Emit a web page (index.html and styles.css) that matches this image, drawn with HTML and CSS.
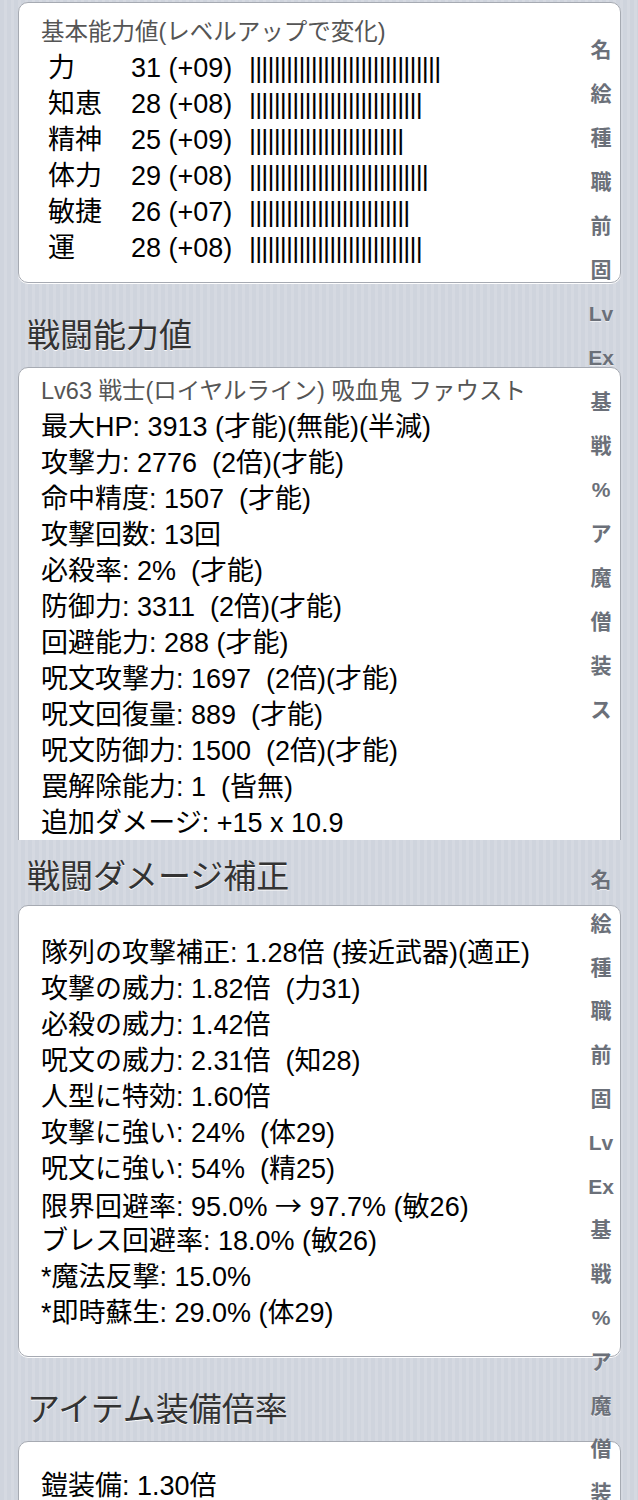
FILE: index.html
```html
<!DOCTYPE html>
<html lang="ja">
<head>
<meta charset="utf-8">
<title>ステータス</title>
<link rel="stylesheet" href="styles.css">
</head>
<body>
<div class="screen screen--one">
  <div class="card card--stats">
    <div class="caption">基本能力値(レベルアップで変化)</div>
    <div class="stat"><span>力</span><span>31 (+09)</span><span class="bar">|||||||||||||||||||||||||||||||</span></div>
    <div class="stat"><span>知恵</span><span>28 (+08)</span><span class="bar">||||||||||||||||||||||||||||</span></div>
    <div class="stat"><span>精神</span><span>25 (+09)</span><span class="bar">|||||||||||||||||||||||||</span></div>
    <div class="stat"><span>体力</span><span>29 (+08)</span><span class="bar">|||||||||||||||||||||||||||||</span></div>
    <div class="stat"><span>敏捷</span><span>26 (+07)</span><span class="bar">||||||||||||||||||||||||||</span></div>
    <div class="stat"><span>運</span><span>28 (+08)</span><span class="bar">||||||||||||||||||||||||||||</span></div>
  </div>
  <div class="section-title">戦闘能力値</div>
  <div class="card card--battle">
    <div class="caption">Lv63 戦士(ロイヤルライン) 吸血鬼 ファウスト</div>
    <div class="line">最大HP: 3913 (才能)(無能)(半減)</div>
    <div class="line">攻撃力: 2776  (2倍)(才能)</div>
    <div class="line">命中精度: 1507  (才能)</div>
    <div class="line">攻撃回数: 13回</div>
    <div class="line">必殺率: 2%  (才能)</div>
    <div class="line">防御力: 3311  (2倍)(才能)</div>
    <div class="line">回避能力: 288 (才能)</div>
    <div class="line">呪文攻撃力: 1697  (2倍)(才能)</div>
    <div class="line">呪文回復量: 889  (才能)</div>
    <div class="line">呪文防御力: 1500  (2倍)(才能)</div>
    <div class="line">罠解除能力: 1  (皆無)</div>
    <div class="line">追加ダメージ: +15 x 10.9</div>
  </div>
  <nav class="index index--one">
    <span>名</span><span>絵</span><span>種</span><span>職</span><span>前</span><span>固</span><span>Lv</span><span>Ex</span><span>基</span><span>戦</span><span>%</span><span>ア</span><span>魔</span><span>僧</span><span>装</span><span>ス</span>
  </nav>
</div>
<div class="screen screen--two">
  <div class="section-title section-title--top">戦闘ダメージ補正</div>
  <div class="card card--damage">
    <div class="line">隊列の攻撃補正: 1.28倍 (接近武器)(適正)</div>
    <div class="line">攻撃の威力: 1.82倍  (力31)</div>
    <div class="line">必殺の威力: 1.42倍</div>
    <div class="line">呪文の威力: 2.31倍  (知28)</div>
    <div class="line">人型に特効: 1.60倍</div>
    <div class="line">攻撃に強い: 24%  (体29)</div>
    <div class="line">呪文に強い: 54%  (精25)</div>
    <div class="line">限界回避率: 95.0% <span class="arrow">→</span> 97.7% (敏26)</div>
    <div class="line">ブレス回避率: 18.0% (敏26)</div>
    <div class="line">*魔法反撃: 15.0%</div>
    <div class="line">*即時蘇生: 29.0% (体29)</div>
  </div>
  <div class="section-title">アイテム装備倍率</div>
  <div class="card card--equip">
    <div class="line">鎧装備: 1.30倍</div>
  </div>
  <nav class="index index--two">
    <span>名</span><span>絵</span><span>種</span><span>職</span><span>前</span><span>固</span><span>Lv</span><span>Ex</span><span>基</span><span>戦</span><span>%</span><span>ア</span><span>魔</span><span>僧</span><span>装</span>
  </nav>
</div>
</body>
</html>
```
FILE: styles.css
```css
html, body {
  margin: 0;
  padding: 0;
}
body {
  font-family: "Liberation Sans", "Noto Sans CJK JP", sans-serif;
  background: repeating-linear-gradient(90deg, #cfd4dd 0, #cfd4dd 4px, #d5d9e1 4px, #d5d9e1 7px);
  color: #000;
}
.screen {
  position: relative;
  overflow: hidden;
  box-sizing: border-box;
}
.screen--one {
  height: 840px;
  padding-top: 2px;
}
.screen--two {
  height: 660px;
}
.card {
  background: #fff;
  border: 1px solid #a6aab2;
  border-radius: 10px;
  margin: 0 17px 0 18px;
  padding: 0 22px;
  box-shadow: 0 1px 0 rgba(255, 255, 255, 0.95);
}
.card--stats {
  padding-top: 11px;
  padding-bottom: 16px;
}
.card--battle {
  padding-top: 5px;
  padding-bottom: 20px;
}
.card--damage {
  padding-top: 29px;
  padding-bottom: 25px;
}
.card--equip {
  padding-top: 26px;
  padding-bottom: 20px;
}
.caption {
  font-size: 23.5px;
  height: 36px;
  line-height: 36px;
  color: #555;
  white-space: pre;
}
.line {
  font-size: 27px;
  height: 36px;
  line-height: 36px;
  white-space: pre;
}
.arrow {
  font-family: "Noto Sans CJK JP", sans-serif;
}
.stat {
  display: grid;
  grid-template-columns: 83px 118px auto;
  padding-left: 7px;
  font-size: 27px;
  height: 36px;
  line-height: 36px;
  white-space: pre;
}
.bar {
  letter-spacing: -0.84px;
}
.section-title {
  font-size: 33px;
  height: 40px;
  line-height: 40px;
  padding: 33px 27px 11px;
  color: #333;
  text-shadow: 0 1px 0 rgba(255, 255, 255, 0.9);
  white-space: nowrap;
}
.section-title--top {
  padding-top: 17px;
  padding-bottom: 8px;
}
.index {
  position: absolute;
  right: 21px;
  width: 32px;
  display: flex;
  flex-direction: column;
  align-items: center;
  font-size: 21px;
  font-weight: bold;
  color: #6b7079;
  text-shadow: 0 1px 0 rgba(255, 255, 255, 0.6);
}
.index span {
  height: 44px;
  line-height: 44px;
}
.index--one {
  top: 28px;
}
.index--two {
  top: 18px;
}
.index--two span {
  height: 43.8px;
  line-height: 43.8px;
}
```
